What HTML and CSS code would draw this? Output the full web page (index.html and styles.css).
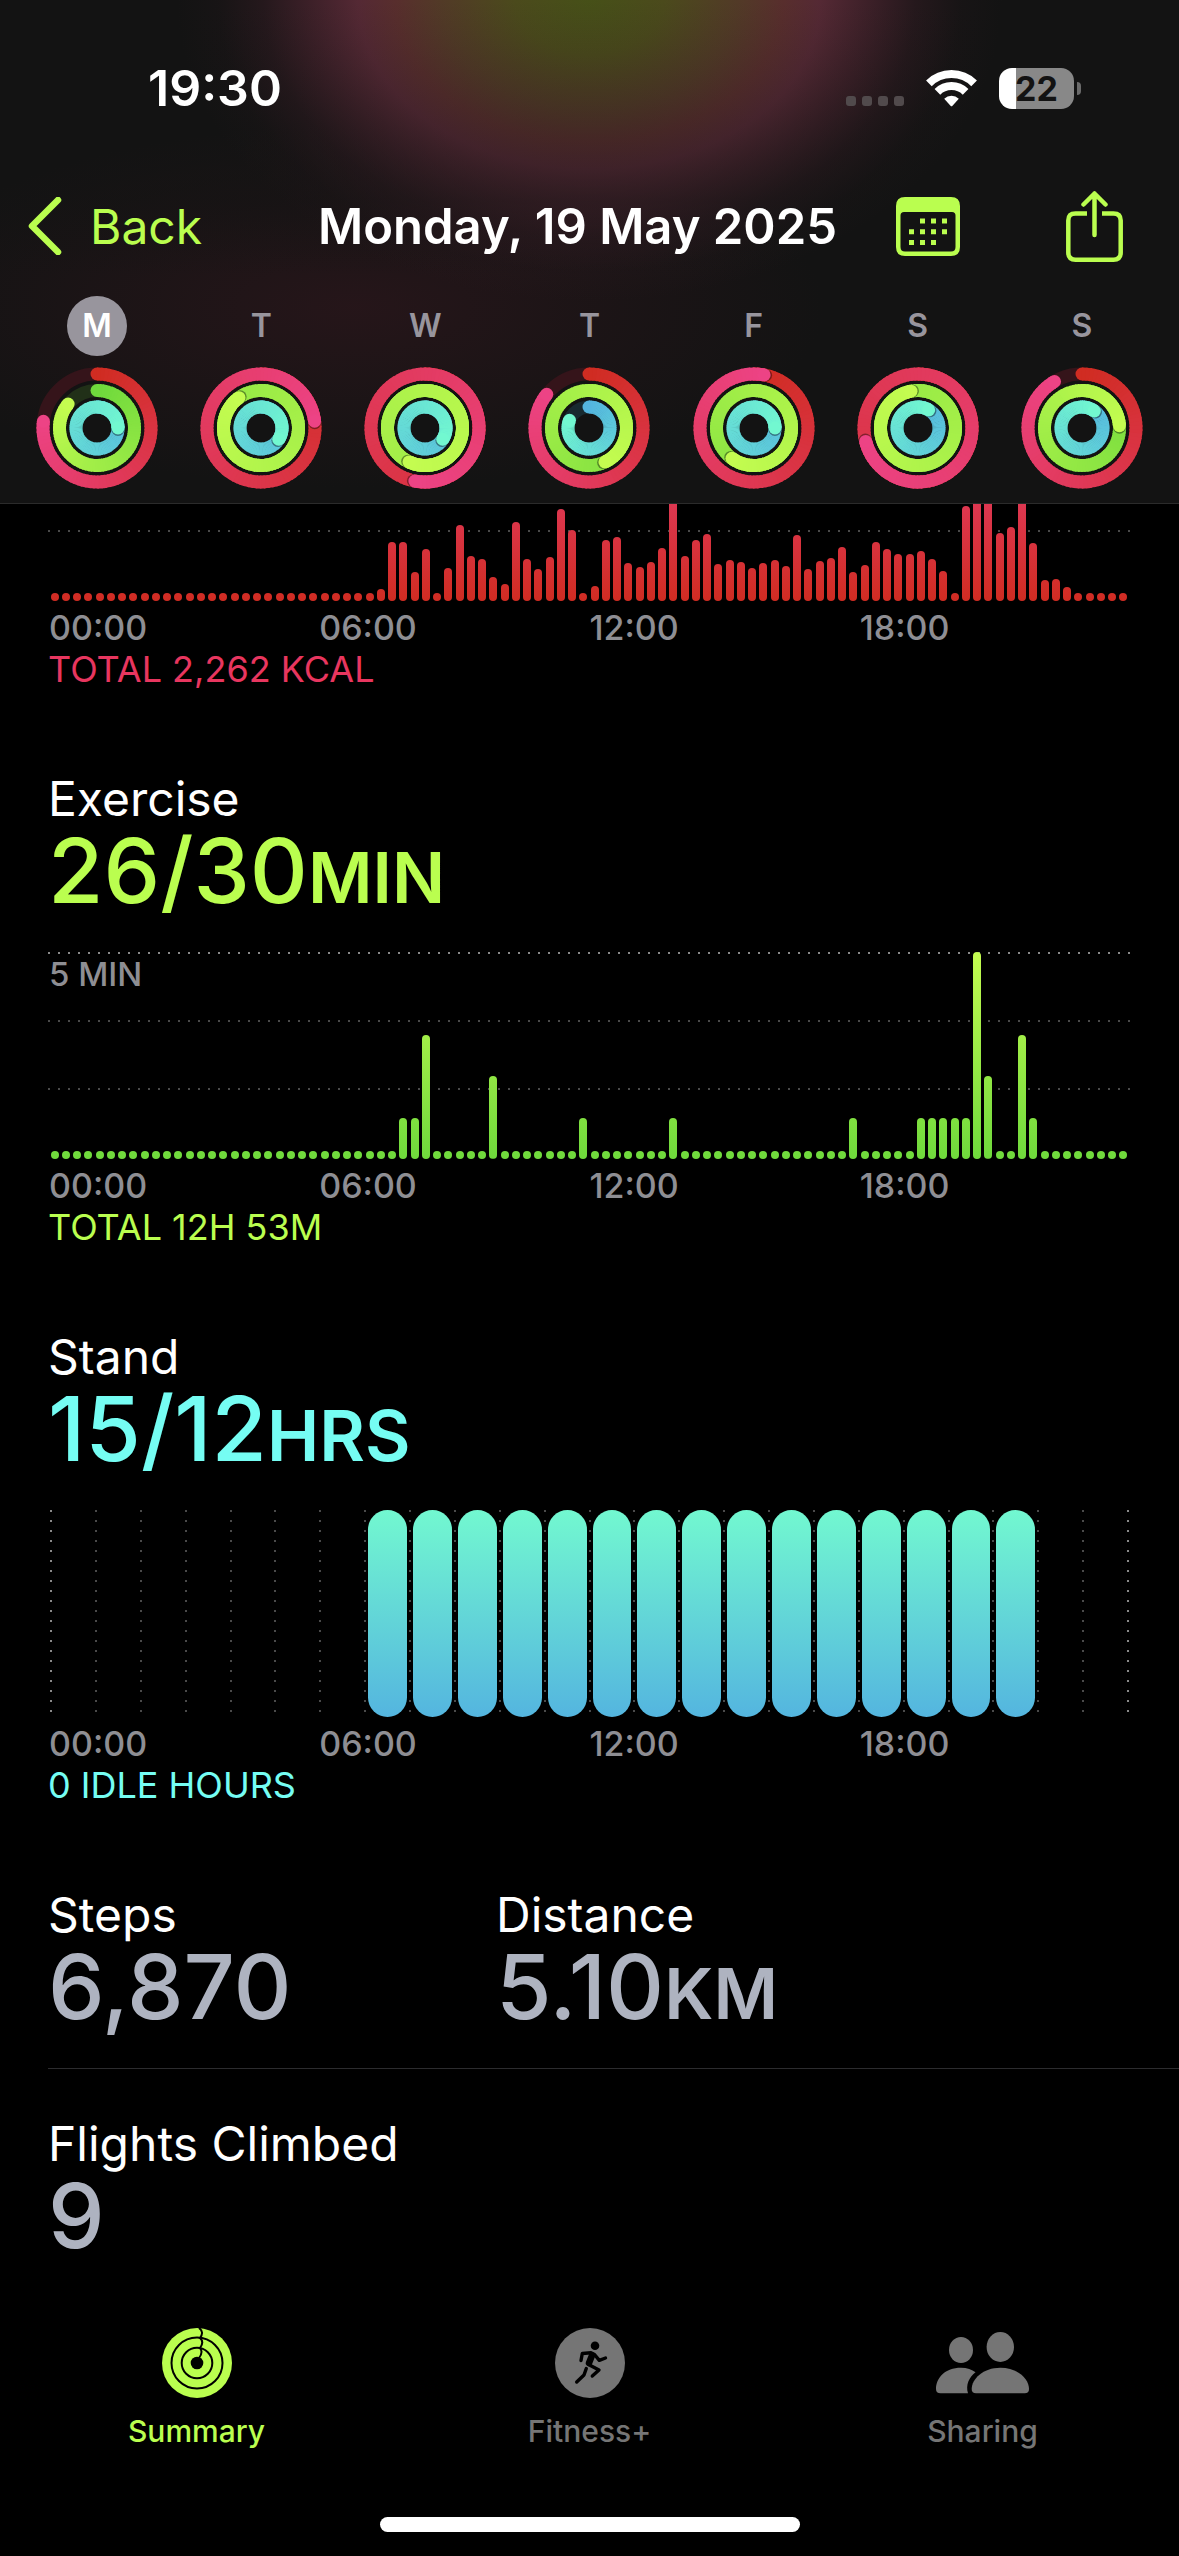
FILE: index.html
```html
<!DOCTYPE html>
<html lang="en">
<head>
    <meta charset="UTF-8">
    <meta name="viewport" content="width=device-width, initial-scale=1.0">
    <title>Activity - Monday, 19 May 2025</title>
    <link rel="stylesheet" href="styles.css">
</head>
<body>
    <header class="header">
        <div class="status">
            <span class="time">19:30</span>
            <div class="status-icons">
                <span class="signal"><i></i><i></i><i></i><i></i></span>
                <svg class="wifi" width="51" height="37" viewBox="0 0 51 37" fill="none" stroke="#fff" stroke-width="8">
                    <path d="M2.9 13.4A32 32 0 0 1 48.1 13.4"/>
                    <path d="M11.4 21.9A20 20 0 0 1 39.6 21.9"/>
                    <path d="M18.2 28.7A10.4 10.4 0 0 1 32.8 28.7L26.5 35.8Q25.5 36.8 24.5 35.8Z" fill="#fff" stroke="none"/>
                </svg>
                <span class="battery"><span class="battery-body">22</span><span class="battery-tip"></span></span>
            </div>
        </div>

        <nav class="nav">
            <a class="back" href="#">
                <svg width="34" height="58" viewBox="0 0 34 58" fill="none" stroke="currentColor" stroke-width="6.5" stroke-linecap="round" stroke-linejoin="round">
                    <path d="M30 3L4 29L30 55"/>
                </svg>
                Back
            </a>
            <h1 class="date">Monday, 19 May 2025</h1>
            <div class="nav-actions">
                <button type="button" class="icon-button" aria-label="Calendar">
                    <svg width="64" height="59" viewBox="0 0 64 59" fill="currentColor">
                        <path fill-rule="evenodd" d="M9 0H55Q64 0 64 9V50Q64 59 55 59H9Q0 59 0 50V9Q0 0 9 0ZM8 15Q4.5 15 4.5 18.5V50Q4.5 54.5 9 54.5H55Q59.5 54.5 59.5 50V18.5Q59.5 15 56 15Z"/>
                        <path d="M24 21.5h5v5h-5zM35 21.5h5v5h-5zM46 21.5h5v5h-5zM13 32.3h5v5h-5zM24 32.3h5v5h-5zM35 32.3h5v5h-5zM46 32.3h5v5h-5zM13 43h5v5h-5zM24 43h5v5h-5zM35 43h5v5h-5z"/>
                    </svg>
                </button>
                <button type="button" class="icon-button" aria-label="Share">
                    <svg width="57" height="71" viewBox="0 0 57 71" fill="none" stroke="currentColor" stroke-width="4.5" stroke-linecap="round" stroke-linejoin="round">
                        <path stroke-linecap="butt" d="M21 22.5H9.5Q2.3 22.5 2.3 29.5V61.5Q2.3 68.7 9.5 68.7H47.5Q54.7 68.7 54.7 61.5V29.5Q54.7 22.5 47.5 22.5H36"/>
                        <path d="M28.5 2.5V44M17.5 13.5L28.5 2.5L39.5 13.5"/>
                    </svg>
                </button>
            </div>
        </nav>

        <div class="week" id="week"></div>
    </header>

    <main>
        <section class="metric move">
            <div class="plot">
                <div class="lines"><i></i><i></i><i></i></div>
                <div class="bars" id="move-bars"></div>
            </div>
            <div class="axis"><span>00:00</span><span>06:00</span><span>12:00</span><span>18:00</span></div>
            <p class="total">TOTAL 2,262 KCAL</p>
        </section>

        <section class="metric exercise">
            <h2>Exercise</h2>
            <p class="value">26/30<small>MIN</small></p>
            <div class="plot">
                <div class="lines"><i>5 MIN</i><i></i><i></i></div>
                <div class="bars" id="exercise-bars"></div>
            </div>
            <div class="axis"><span>00:00</span><span>06:00</span><span>12:00</span><span>18:00</span></div>
            <p class="total">TOTAL 12H 53M</p>
        </section>

        <section class="metric stand">
            <h2>Stand</h2>
            <p class="value">15/12<small>HRS</small></p>
            <div class="plot hours" id="stand-hours"></div>
            <div class="axis"><span>00:00</span><span>06:00</span><span>12:00</span><span>18:00</span></div>
            <p class="total">0 IDLE HOURS</p>
        </section>

        <section class="stats">
            <div class="stat">
                <h2>Steps</h2>
                <p class="value">6,870</p>
            </div>
            <div class="stat">
                <h2>Distance</h2>
                <p class="value">5.10<small>KM</small></p>
            </div>
        </section>

        <section class="stats">
            <div class="stat">
                <h2>Flights Climbed</h2>
                <p class="value">9</p>
            </div>
        </section>
    </main>

    <footer class="tabbar">
        <nav class="tabs">
            <a class="tab active" href="#">
                <svg width="70" height="70" viewBox="0 0 70 70" fill="none" stroke="#000" stroke-width="2">
                    <circle cx="35" cy="35" r="35" fill="currentColor" stroke="none"/>
                    <circle cx="35" cy="35" r="25.5"/>
                    <circle cx="35" cy="35" r="15.3"/>
                    <circle cx="35" cy="35" r="6.3" fill="#000" stroke="none"/>
                    <path d="M37 0Q42.5 4 38 10Q42.5 14 38 20Q41.5 24 37 30"/>
                </svg>
                Summary
            </a>
            <a class="tab" href="#">
                <svg width="70" height="70" viewBox="0 0 70 70" fill="none" stroke="#000" stroke-width="3.4" stroke-linecap="round" stroke-linejoin="round">
                    <circle cx="35" cy="35" r="35" fill="currentColor" stroke="none"/>
                    <circle cx="40" cy="17.7" r="4.3" fill="#000" stroke="none"/>
                    <path d="M26 32.5L27.3 25.5L36 24.7L39.5 26.5L44.3 32.3L50.5 30"/>
                    <path d="M37 27.5L34 35" stroke-width="6.5"/>
                    <path d="M33.5 36.5L44 42L37.3 48"/>
                    <path d="M31.3 40.5L29 47L21.7 54"/>
                </svg>
                Fitness+
            </a>
            <a class="tab" href="#">
                <svg width="94" height="70" viewBox="0 0 94 70" fill="currentColor">
                    <ellipse cx="25" cy="22" rx="12" ry="13"/>
                    <ellipse cx="64.3" cy="19" rx="13.7" ry="15"/>
                    <path d="M32 65.3H4.5Q0 65.3 0 61C0 50 9 39.7 25 39.7C31 39.7 36 41.5 39.5 44.3C33 49.5 29.5 57 32 65.3Z"/>
                    <path d="M40 65.3Q35.7 65.3 35.7 61C35.7 51 47 39.7 64.3 39.7C82 39.7 93 51 93 61Q93 65.3 88.7 65.3Z"/>
                </svg>
                Sharing
            </a>
        </nav>
        <div class="home-indicator"></div>
    </footer>

    <script src="script.js"></script>
</body>
</html>
```
FILE: styles.css
```css
* {
    box-sizing: border-box;
}
body {
    font-family: Inter, "Liberation Sans", sans-serif;
    background-color: #000;
    color: #fff;
    margin: 0;
    min-height: 100vh;
    display: flex;
    flex-direction: column;
}
h1, h2, p {
    margin: 0;
    font-weight: 400;
}
a {
    color: inherit;
    text-decoration: none;
}
button {
    padding: 0;
    border: none;
    background: none;
    color: inherit;
    font-family: inherit;
    cursor: pointer;
}
svg {
    display: block;
}

/* header */
.header {
    position: sticky;
    top: 0;
    z-index: 1;
    border-bottom: 1px solid #2b2b2b;
    background:
        linear-gradient(to bottom, transparent, rgba(19, 19, 19, 0.4) 40%, transparent 55%),
        radial-gradient(ellipse 35% 60% at 50% 0, #465018 0%, #4b4a1c 18%, #523a27 36%, #582e2d 47%, rgba(88, 42, 54, 0.95) 56%, rgba(80, 38, 50, 0.7) 67%, rgba(64, 32, 42, 0.4) 79%, rgba(48, 28, 34, 0.15) 90%, transparent 100%),
        radial-gradient(ellipse 40% 36% at 30% 61%, rgba(56, 24, 32, 0.5), transparent),
        #131313;
}
.status {
    display: flex;
    justify-content: space-between;
    align-items: center;
    height: 176px;
    padding: 0 98px 0 148px;
}
.time {
    font-size: 50px;
    font-weight: 600;
}
.status-icons {
    display: flex;
    align-items: center;
    gap: 22px;
}
.signal {
    display: flex;
    gap: 6px;
    padding-top: 26px;
}
.signal i {
    width: 10px;
    height: 10px;
    border-radius: 3px;
    background: #514a4c;
}
.battery {
    display: flex;
    align-items: center;
    gap: 3px;
}
.battery-body {
    width: 75px;
    height: 41px;
    border-radius: 13px;
    background: linear-gradient(to right, #fff 17px, #888 17px);
    color: #131313;
    font-size: 34px;
    font-weight: 700;
    line-height: 41px;
    text-align: center;
}
.battery-tip {
    width: 4px;
    height: 13px;
    border-radius: 0 4px 4px 0;
    background: #6b6b6b;
}
.nav {
    display: grid;
    grid-template-columns: 290px 1fr auto;
    align-items: center;
    height: 100px;
    padding: 0 56px 0 28px;
}
.back {
    display: flex;
    align-items: center;
    gap: 28px;
    color: #bafe4f;
    font-size: 48px;
}
.date {
    font-size: 49px;
    font-weight: 600;
    white-space: nowrap;
}
.nav-actions {
    display: flex;
    align-items: center;
    gap: 106px;
    color: #bafe4f;
}
.week {
    display: grid;
    grid-template-columns: repeat(7, 1fr);
    padding: 20px 15px 15px;
}
.day {
    display: flex;
    flex-direction: column;
    align-items: center;
    gap: 12px;
    color: #98959d;
    font-size: 32px;
    font-weight: 600;
}
.day-name {
    width: 60px;
    border-radius: 50%;
    line-height: 60px;
}
.day.selected .day-name {
    background: #98959d;
    color: #fff;
}

/* charts */
main {
    margin-top: -110px;
}
h2 {
    font-size: 48px;
    line-height: 60px;
}
.value {
    font-size: 90px;
    font-weight: 500;
    line-height: 84px;
}
.value small {
    font-size: 70px;
    font-weight: 600;
    line-height: 1;
}
.metric {
    padding: 0 48px;
    margin-bottom: 82px;
}
.metric .value {
    margin-bottom: 39px;
}
.plot {
    display: grid;
    height: 207px;
}
.lines, .bars {
    grid-area: 1 / 1;
}
.lines i {
    display: block;
    height: 68px;
    padding: 2px 1px;
    background: repeating-linear-gradient(to right, #4a4a4a 0 2px, transparent 2px 10px) top / 100% 2px no-repeat;
    color: #8e8e93;
    font-size: 33px;
    font-style: normal;
    font-weight: 500;
    line-height: 40px;
}
.lines i:first-child {
    background-image: repeating-linear-gradient(to right, #8a8a8a 0 2px, transparent 2px 10px);
}
.bars {
    display: flex;
    align-items: flex-end;
    justify-content: space-around;
    padding: 0 1px;
}
.bars span {
    width: 8px;
    min-height: 8px;
    border-radius: 4px;
    background: linear-gradient(to top, var(--from), var(--to)) bottom / 100% 207px;
}
.move {
    --from: #d02c22;
    --to: #ed4385;
    --text: #e8365f;
}
.exercise {
    --from: #6fd93c;
    --to: #c4fc50;
    --text: #bafe4f;
}
.stand {
    --from: #54b5df;
    --to: #72f8d0;
    --text: #75fdf3;
}
.metric .value, .total {
    color: var(--text);
}
.hours {
    grid-template-columns: repeat(24, 1fr) 2px;
    padding: 0 2px;
}
.hour {
    padding-left: 4px;
    padding-right: 2px;
    background: repeating-linear-gradient(to bottom, #4a4a4a 0 2px, transparent 2px 10px) left / 2px 100% no-repeat;
}
.hour:first-child, .hour:last-child {
    background-image: repeating-linear-gradient(to bottom, #8a8a8a 0 2px, transparent 2px 10px);
}
.hour:last-child {
    padding: 0;
}
.hour span {
    display: block;
    height: 100%;
    border-radius: 20px;
    background: linear-gradient(to top, var(--from), var(--to));
}
.axis {
    display: grid;
    grid-template-columns: repeat(4, 1fr);
    padding: 4px 1px 0;
    color: #8e8e93;
    font-size: 34px;
    font-weight: 500;
    line-height: 46px;
}
.total {
    font-size: 36px;
    line-height: 36px;
}

/* steps, distance, flights */
.stats {
    display: grid;
    grid-template-columns: 448px 1fr;
    margin-left: 48px;
    padding-bottom: 39px;
}
.stats .value {
    color: #aeb3c0;
}
.stats + .stats {
    padding-top: 45px;
    border-top: 1px solid #2c2c2e;
}

/* tab bar */
.tabbar {
    margin-top: auto;
    padding-bottom: 24px;
}
.tabs {
    display: grid;
    grid-template-columns: repeat(3, 1fr);
}
.tab {
    display: flex;
    flex-direction: column;
    align-items: center;
    gap: 15px;
    color: #757575;
    font-size: 30px;
    font-weight: 500;
    line-height: 36px;
}
.tab.active {
    color: #bafe4f;
}
.home-indicator {
    width: 420px;
    height: 15px;
    margin: 68px auto 0;
    border-radius: 8px;
    background: #fff;
}
```
FILE: script.js
```javascript
// Progress of each day: move, exercise, stand (1 = goal reached)
const week = [
    { name: 'M', rings: [0.77, 0.86, 1.25], selected: true },
    { name: 'T', rings: [1.23, 1.9, 1.34] },
    { name: 'W', rings: [1.53, 2.57, 1.34] },
    { name: 'T', rings: [0.857, 1.43, 0.81] },
    { name: 'F', rings: [1.03, 1.6, 1.25] },
    { name: 'S', rings: [1.71, 1.97, 1.085] },
    { name: 'S', rings: [0.915, 1.24, 1.1] }
];

const ringStyles = [
    { radius: 54, from: [208, 44, 34], to: [237, 67, 133], track: '#35141a' },
    { radius: 37.5, from: [111, 217, 60], to: [196, 252, 80], track: '#213018' },
    { radius: 21, from: [84, 181, 223], to: [114, 248, 208], track: '#182a30' }
];

function point(radius, turns) {
    const angle = turns * 2 * Math.PI;
    return [60 + radius * Math.sin(angle), 60 - radius * Math.cos(angle)];
}

function mix(from, to, t) {
    return 'rgb(' + from.map((c, i) => Math.round(c + (to[i] - c) * t)).join(',') + ')';
}

// SVG has no conic gradient, so a ring is drawn as many short arcs
function drawRing(style, progress) {
    const r = style.radius;
    let svg = `<circle cx="60" cy="60" r="${r}" fill="none" stroke="${style.track}" stroke-width="13"/>`;
    const start = point(r, 0);
    svg += `<circle cx="${start[0]}" cy="${start[1]}" r="6.5" fill="${mix(style.from, style.to, 0)}"/>`;

    const steps = Math.ceil(progress * 90);
    for (let i = 0; i < steps; i++) {
        const a = point(r, progress * i / steps);
        const b = point(r, Math.min(progress, progress * (i + 1.4) / steps));
        svg += `<path d="M${a}A${r} ${r} 0 0 1 ${b}" fill="none" stroke="${mix(style.from, style.to, i / steps)}" stroke-width="13"/>`;
        // shadow under the tip where the ring overlaps itself
        if (progress > 1 && i === steps - 4) {
            const s = point(r, progress + 1.5 / (2 * Math.PI * r));
            svg += `<circle cx="${s[0]}" cy="${s[1]}" r="6.5" fill="#000" opacity="0.4"/>`;
        }
    }

    const end = point(r, progress);
    svg += `<circle cx="${end[0]}" cy="${end[1]}" r="6.5" fill="${mix(style.from, style.to, 1)}"/>`;
    return svg;
}

document.getElementById('week').innerHTML = week.map(day => `
    <button type="button" class="day${day.selected ? ' selected' : ''}">
        <span class="day-name">${day.name}</span>
        <svg width="120" height="120" viewBox="0 0 120 120" overflow="visible">
            <circle cx="60" cy="60" r="59" fill="#131313"/>
            ${day.rings.map((progress, i) => drawRing(ringStyles[i], progress)).join('')}
        </svg>
    </button>`).join('');

// One bar for each quarter of an hour
const move = new Array(29).fill(0).concat([
    12, 59, 59, 29, 52, 0, 33, 76, 45, 42, 24, 17, 79, 42, 32, 44, 92, 71, 0,
    15, 61, 64, 38, 34, 39, 53, 112, 45, 61, 67, 37, 41, 39, 33, 38, 41, 35, 66, 32,
    40, 43, 54, 29, 36, 59, 52, 47, 47, 50, 42, 30, 0, 95, 130, 150, 68, 74, 120,
    58, 21, 22, 14, 0, 0, 0, 0, 0
]);

const exercise = new Array(96).fill(0);
[31, 32, 47, 55, 71, 77, 78, 79, 80, 81, 87].forEach(i => exercise[i] = 1);
exercise[33] = 3;
exercise[39] = 2;
exercise[82] = 5;
exercise[83] = 2;
exercise[86] = 3;

function drawBars(id, values, max) {
    document.getElementById(id).innerHTML = values
        .map(value => `<span style="height: ${value / max * 100}%"></span>`)
        .join('');
}

drawBars('move-bars', move, 207);
drawBars('exercise-bars', exercise, 5);

// Stand hours, 07:00 to 21:00
let hours = '';
for (let hour = 0; hour <= 24; hour++) {
    hours += `<div class="hour">${hour >= 7 && hour <= 21 ? '<span></span>' : ''}</div>`;
}
document.getElementById('stand-hours').innerHTML = hours;
```
